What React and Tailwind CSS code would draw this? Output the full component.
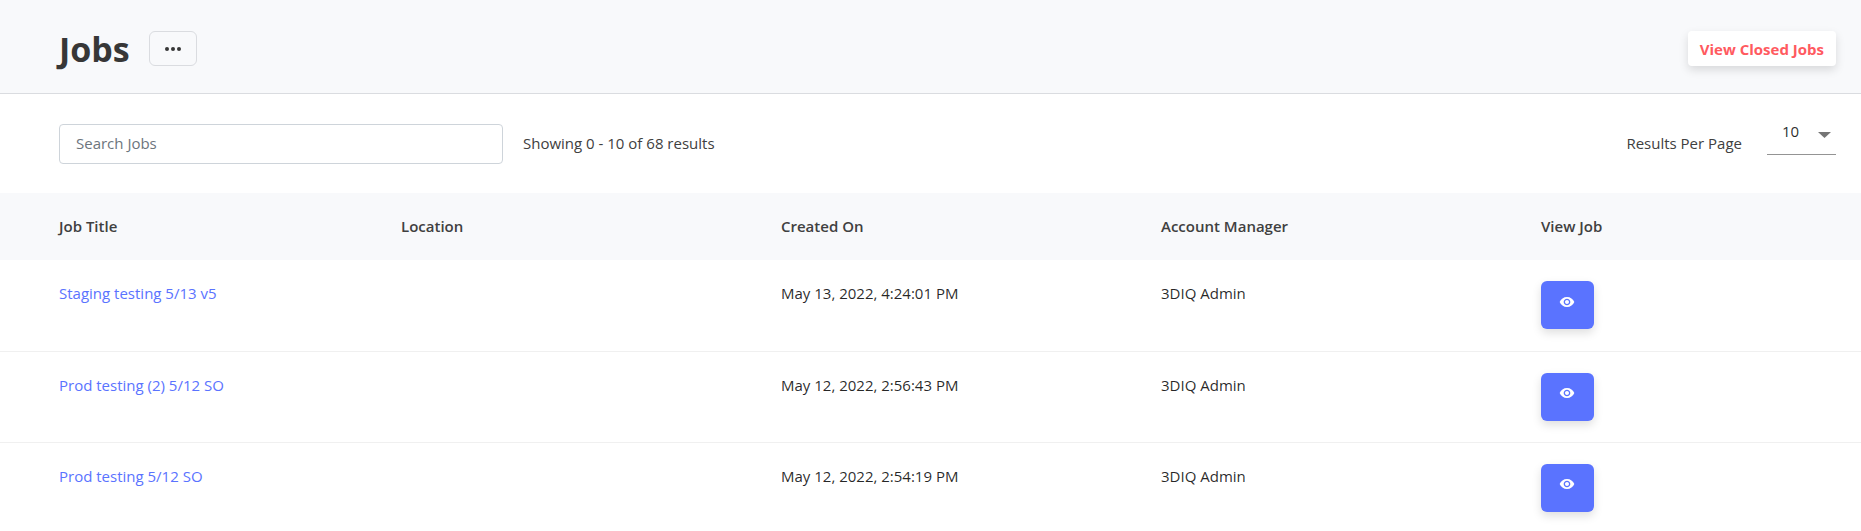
import { useState } from 'react'
import { MdVisibility } from 'react-icons/md'

const jobs = [
  { title: 'Staging testing 5/13 v5', location: '', created: 'May 13, 2022, 4:24:01 PM', manager: '3DIQ Admin' },
  { title: 'Prod testing (2) 5/12 SO', location: '', created: 'May 12, 2022, 2:56:43 PM', manager: '3DIQ Admin' },
  { title: 'Prod testing 5/12 SO', location: '', created: 'May 12, 2022, 2:54:19 PM', manager: '3DIQ Admin' },
]

export default function App() {
  const [search, setSearch] = useState('')
  const [perPage, setPerPage] = useState('10')

  return (
    <div className="bg-white text-[15px] leading-6 text-[#404040] font-['Open_Sans',sans-serif]">
      <header className="flex items-center justify-between bg-[#f8f9fb] border-b border-[#dadce0] pl-[59px] pr-[25px] pt-6 pb-5">
        <div className="flex items-center gap-[19px]">
          <h1 className="pt-0.5 text-[34px] leading-[47px] font-bold text-[#373737]">Jobs</h1>
          <button aria-label="More options" className="w-12 h-[35px] flex items-center justify-center rounded-md border border-[#dadce0] text-[#373737]">
            <svg width="16" height="4" viewBox="0 0 16 4" fill="currentColor">
              <circle cx="2" cy="2" r="2" />
              <circle cx="8" cy="2" r="2" />
              <circle cx="14" cy="2" r="2" />
            </svg>
          </button>
        </div>
        <button className="h-[35px] px-3 rounded bg-white text-[#ff5a5f] font-bold shadow-[0_4px_10px_rgba(0,0,0,0.13)]">
          View Closed Jobs
        </button>
      </header>

      <div className="flex items-center justify-between pl-[59px] pr-[25px] pt-[30px] pb-[29px]">
        <div className="flex items-center gap-5">
          <input
            type="text"
            aria-label="Search Jobs"
            placeholder="Search Jobs"
            value={search}
            onChange={e => setSearch(e.target.value)}
            className="w-[444px] h-10 px-4 pb-0.5 rounded border border-[#ced4da] placeholder:text-[#6c757d]"
          />
          <p className="pb-0.5">Showing 0 - 10 of 68 results</p>
        </div>
        <div className="flex items-center self-stretch gap-[25px]">
          <label htmlFor="per-page" className="pb-0.5">Results Per Page</label>
          <div className="relative self-start -mt-2">
            <select
              id="per-page"
              value={perPage}
              onChange={e => setPerPage(e.target.value)}
              className="block appearance-none w-[69px] h-[39px] pl-[15px] pb-2 border-b border-[#949494] bg-transparent text-black/85"
            >
              <option>10</option>
              <option>25</option>
              <option>50</option>
            </select>
            <svg className="absolute right-[5px] top-4 pointer-events-none" width="13" height="6" viewBox="0 0 13 6" fill="#757575">
              <path d="M0 0h13L6.500 6z" />
            </svg>
          </div>
        </div>
      </div>

      <table className="w-full table-fixed text-left">
        <thead className="bg-[#f8f9fb]">
          <tr className="h-[67px]">
            <th className="w-[385px] pl-[59px] pb-0.5 font-semibold">Job Title</th>
            <th className="pl-4 pb-0.5 font-semibold">Location</th>
            <th className="pl-4 pb-0.5 font-semibold">Created On</th>
            <th className="pl-4 pb-0.5 font-semibold">Account Manager</th>
            <th className="w-[336px] pl-4 pb-0.5 font-semibold">View Job</th>
          </tr>
        </thead>
        <tbody className="text-black/85">
          {jobs.map(job => (
            <tr key={job.title} className="h-[91px] align-top border-b border-[#f0f0f0]">
              <td className="pl-[59px] pt-[21px]">
                <a href="#" className="text-[#5a73ff]">{job.title}</a>
              </td>
              <td className="pl-4 pt-[21px]">{job.location}</td>
              <td className="pl-4 pt-[21px]">{job.created}</td>
              <td className="pl-4 pt-[21px]">{job.manager}</td>
              <td className="pl-4 pt-[21px]">
                <button aria-label={`View ${job.title}`} className="w-[53px] h-12 pb-[7px] pr-0.5 flex items-center justify-center rounded-md bg-[#5a73ff] text-white shadow-[0_4px_10px_rgba(0,0,0,0.13)]">
                  <MdVisibility size={16} />
                </button>
              </td>
            </tr>
          ))}
        </tbody>
      </table>
    </div>
  )
}
